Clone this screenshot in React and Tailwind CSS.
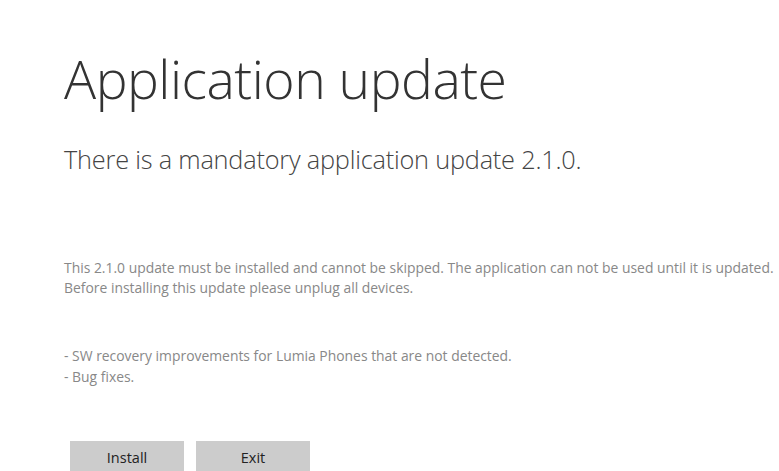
export default function App() {
  return (
    <div className="w-[779px] h-[471px] overflow-hidden bg-white pl-[64px]" style={{ fontFamily: '"Open Sans", "Noto Sans", sans-serif' }}>
      <h1 className="pt-[44px] text-[53.5px] leading-[70px] font-light text-[#333333] tracking-[-0.5px]">Application update</h1>
      <p className="mt-[29px] text-[25.3px] leading-[32px] font-light text-[#444444] tracking-[-0.2px]">There is a mandatory application update 2.1.0.</p>
      <div className="mt-[83px] text-[13.9px] leading-[20px] text-[#888888]">
        <p>This 2.1.0 update must be installed and cannot be skipped. The application can not be used until it is updated.</p>
        <p>Before installing this update please unplug all devices.</p>
      </div>
      <div className="mt-[47px] text-[13.9px] leading-[21px] text-[#888888]">
        <p>- SW recovery improvements for Lumia Phones that are not detected.</p>
        <p>- Bug fixes.</p>
      </div>
      <div className="mt-[54px] ml-[6px] flex gap-[12px]">
        <button className="w-[114px] h-[34px] bg-[#cccccc] text-[14.5px] text-[#222222]">Install</button>
        <button className="w-[114px] h-[34px] bg-[#cccccc] text-[14.5px] text-[#222222]">Exit</button>
      </div>
    </div>
  );
}
